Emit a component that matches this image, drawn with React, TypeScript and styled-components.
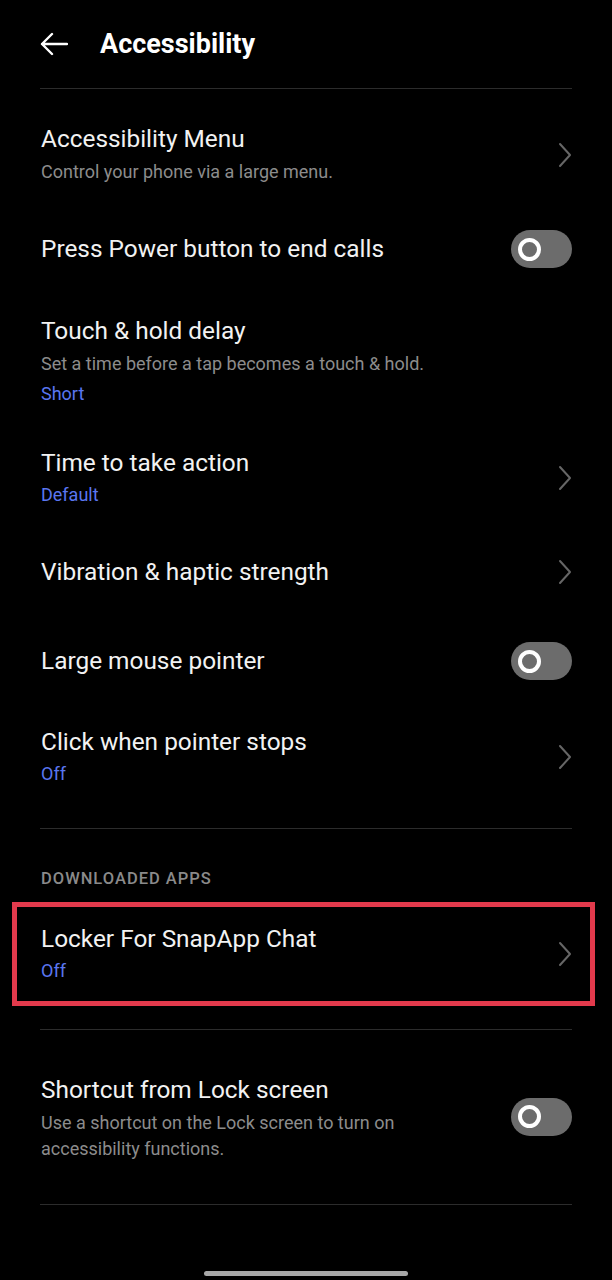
import React from "react";
import styled, { createGlobalStyle } from "styled-components";

const Global = createGlobalStyle`
  html, body { margin: 0; padding: 0; background: #000; }
  body { font-family: Roboto, "Noto Sans", sans-serif; color: #fff; -webkit-font-smoothing: antialiased; }
  * { box-sizing: border-box; }
`;

const Screen = styled.div`
  width: 612px;
  height: 1280px;
  background: #000;
  display: flex;
  flex-direction: column;
  position: relative;
  overflow: hidden;
`;

const Header = styled.header`
  height: 88px;
  display: flex;
  align-items: center;
  padding: 0 40px;
  gap: 32px;
`;

const BackButton = styled.button`
  background: none;
  border: none;
  padding: 0;
  width: 28px;
  height: 28px;
  display: flex;
  align-items: center;
  justify-content: center;
  color: #fff;
`;

const Title = styled.h1`
  margin: 0;
  font-size: 27px;
  font-weight: 700;
  line-height: 30px;
`;

const Divider = styled.div<{ $mt?: number }>`
  height: 1px;
  margin: ${(p) => p.$mt ?? 0}px 40px 0;
  background: #2c2c2c;
`;

const Row = styled.div<{ $pt: number; $pb: number; $inset?: boolean }>`
  display: flex;
  align-items: center;
  padding: ${(p) => p.$pt}px ${(p) => (p.$inset ? 18 : 40)}px ${(p) => p.$pb}px
    ${(p) => (p.$inset ? 24 : 41)}px;
  gap: 16px;
`;

const Texts = styled.div`
  flex: 1;
  display: flex;
  flex-direction: column;
`;

const ItemTitle = styled.div`
  font-size: 24.4px;
  line-height: 30px;
  color: #f2f2f2;
`;

const Sub = styled.div`
  font-size: 18px;
  line-height: 26px;
  color: #8c8c8c;
  margin-top: 5px;
  padding-right: 20px;
`;

const Value = styled.div`
  font-size: 18px;
  line-height: 26px;
  color: #5a76f0;
  margin-top: 4px;
`;

const Section = styled.div`
  padding: 39px 41px 12px;
  font-size: 16.5px;
  font-weight: 500;
  line-height: 22px;
  color: #8a8a8a;
  letter-spacing: 1px;
`;

const Highlight = styled.div`
  margin: 0 17px 0 12px;
  border: 5px solid #e23a4c;
`;

const Toggle = styled.div<{ $up?: number }>`
  width: 61px;
  height: 38px;
  border-radius: 19px;
  background: #6c6c6c;
  display: flex;
  align-items: center;
  padding-left: 7px;
  flex-shrink: 0;
  margin-top: ${(p) => -(p.$up ?? 0) * 2}px;
`;

const Knob = styled.div`
  width: 23px;
  height: 23px;
  border-radius: 50%;
  border: 4.5px solid #fff;
  background: #6c6c6c;
`;

const HomeBar = styled.div`
  position: absolute;
  left: 204px;
  bottom: 4px;
  width: 204px;
  height: 5px;
  border-radius: 3px;
  background: #a8a8a8;
`;

const Chevron = () => (
  <svg width="16" height="26" viewBox="0 0 16 26" style={{ flexShrink: 0, marginRight: -1 }}>
    <path d="M3 2 L13 13 L3 24" fill="none" stroke="#666" strokeWidth="2" strokeLinecap="round" strokeLinejoin="round" />
  </svg>
);

const Arrow = () => (
  <svg width="28" height="24" viewBox="0 0 28 24">
    <path d="M27 12 H2 M12 2 L2 12 L12 22" fill="none" stroke="#fff" strokeWidth="2.4" strokeLinecap="round" strokeLinejoin="round" />
  </svg>
);

const Switch = ({ up }: { up?: number }) => (
  <Toggle $up={up}>
    <Knob />
  </Toggle>
);

export default function App() {
  return (
    <Screen>
      <Global />
      <Header>
        <BackButton aria-label="Back">
          <Arrow />
        </BackButton>
        <Title>Accessibility</Title>
      </Header>
      <Divider />

      <Row $pt={35} $pb={22}>
        <Texts>
          <ItemTitle>Accessibility Menu</ItemTitle>
          <Sub>Control your phone via a large menu.</Sub>
        </Texts>
        <Chevron />
      </Row>

      <Row $pt={23} $pb={23}>
        <Texts>
          <ItemTitle>Press Power button to end calls</ItemTitle>
        </Texts>
        <Switch />
      </Row>

      <Row $pt={25} $pb={23}>
        <Texts>
          <ItemTitle>Touch &amp; hold delay</ItemTitle>
          <Sub>Set a time before a tap becomes a touch &amp; hold.</Sub>
          <Value>Short</Value>
        </Texts>
      </Row>

      <Row $pt={18} $pb={23}>
        <Texts>
          <ItemTitle>Time to take action</ItemTitle>
          <Value>Default</Value>
        </Texts>
        <Chevron />
      </Row>

      <Row $pt={26} $pb={28}>
        <Texts>
          <ItemTitle>Vibration &amp; haptic strength</ItemTitle>
        </Texts>
        <Chevron />
      </Row>

      <Row $pt={27} $pb={26}>
        <Texts>
          <ItemTitle>Large mouse pointer</ItemTitle>
        </Texts>
        <Switch />
      </Row>

      <Row $pt={21} $pb={41}>
        <Texts>
          <ItemTitle>Click when pointer stops</ItemTitle>
          <Value>Off</Value>
        </Texts>
        <Chevron />
      </Row>

      <Divider />
      <Section>DOWNLOADED APPS</Section>

      <Highlight>
        <Row $pt={17} $pb={17} $inset>
          <Texts>
            <ItemTitle>Locker For SnapApp Chat</ItemTitle>
            <Value>Off</Value>
          </Texts>
          <Chevron />
        </Row>
      </Highlight>

      <Divider $mt={23} />

      <Row $pt={45} $pb={42}>
        <Texts>
          <ItemTitle>Shortcut from Lock screen</ItemTitle>
          <Sub>Use a shortcut on the Lock screen to turn on accessibility functions.</Sub>
        </Texts>
        <Switch up={2} />
      </Row>

      <Divider />
      <HomeBar />
    </Screen>
  );
}
